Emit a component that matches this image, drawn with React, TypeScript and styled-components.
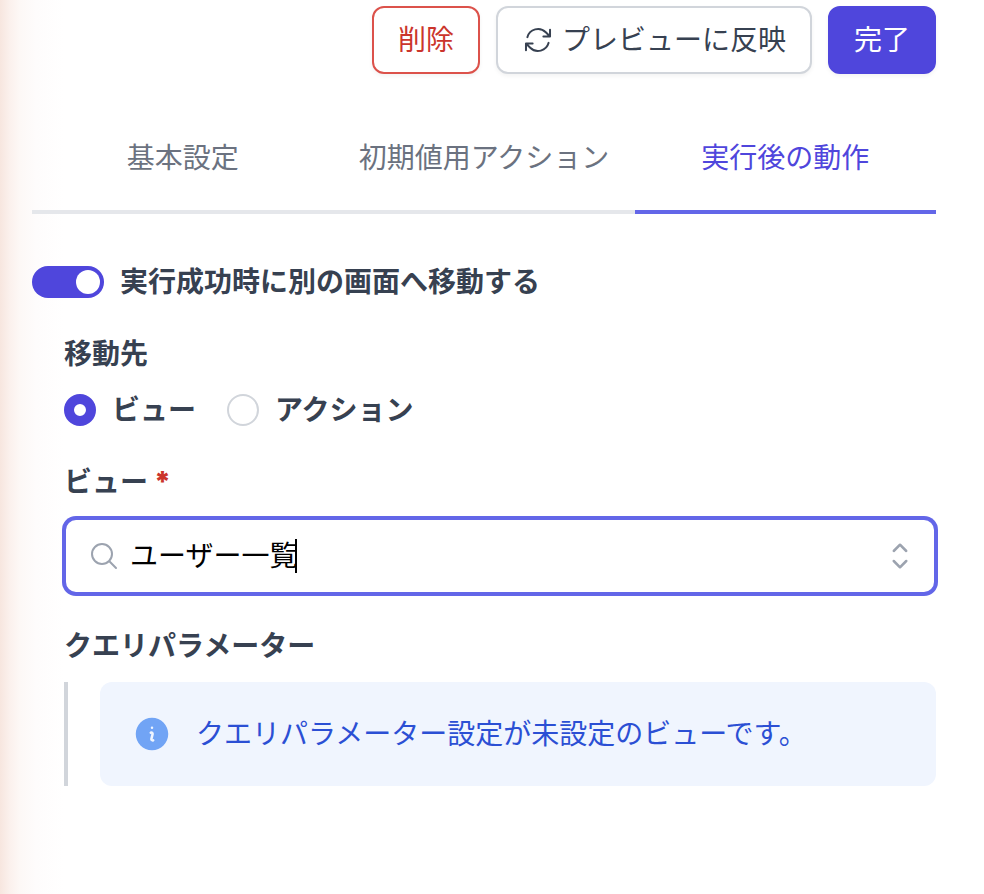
import { useState } from "react";
import styled, { createGlobalStyle, css } from "styled-components";
import {
  HiChevronUpDown,
  HiInformationCircle,
  HiOutlineArrowPath,
  HiOutlineMagnifyingGlass,
} from "react-icons/hi2";

const color = {
  text: "#374151",
  muted: "#6b7280",
  icon: "#9ca3af",
  line: "#d1d5db",
  track: "#e5e7eb",
  primary: "#4f46dc",
  ring: "#6366e8",
  danger: "#cb352c",
  dangerLine: "#dc524b",
  info: "#2b4fd4",
  infoIcon: "#71a4f5",
  infoBg: "#f0f5fe",
};

const GlobalStyle = createGlobalStyle`
  *, *::before, *::after { box-sizing: border-box; }
  html { min-height: 100%; background: #fff; }
  body {
    margin: 0;
    color: ${color.text};
    font-family: Inter, "Noto Sans CJK JP", sans-serif;
    font-size: 28px;
    line-height: 40px;
  }
  button, input { font: inherit; color: inherit; }
`;

const Panel = styled.main`
  min-height: 100vh;
  padding: 6px 48px 48px 32px;
  background: linear-gradient(
    to right,
    #f7e6df 0,
    #fbf1ed 10px,
    #fdf8f6 20px,
    #fefcfc 36px,
    #fff 64px
  );
`;

const Toolbar = styled.header`
  display: flex;
  justify-content: flex-end;
  gap: 16px;
`;

const variants = {
  danger: css`
    color: ${color.danger};
    background: #fff;
    border-color: ${color.dangerLine};
  `,
  plain: css`
    color: ${color.text};
    background: #fff;
    border-color: ${color.line};
  `,
  primary: css`
    color: #fff;
    background: ${color.primary};
    border-color: ${color.primary};
  `,
};

const Button = styled.button<{ $variant: keyof typeof variants }>`
  display: inline-flex;
  align-items: center;
  gap: 8px;
  padding: 12px 24px;
  border: 2px solid;
  border-radius: 12px;
  box-shadow: 0 2px 4px rgba(0, 0, 0, 0.05);
  cursor: pointer;
  ${(p) => variants[p.$variant]}
`;

const Tabs = styled.div`
  display: grid;
  grid-template-columns: repeat(3, 1fr);
  margin-top: 32px;
`;

const Tab = styled.button<{ $active: boolean }>`
  padding: 32px 8px;
  border: 0;
  border-bottom: 4px solid ${(p) => (p.$active ? color.ring : color.track)};
  background: none;
  color: ${(p) => (p.$active ? color.primary : color.muted)};
  cursor: pointer;
`;

const SwitchRow = styled.label`
  display: flex;
  align-items: center;
  gap: 16px;
  margin-top: 48px;
  font-weight: 700;
`;

const Switch = styled.input`
  appearance: none;
  display: flex;
  width: 72px;
  height: 32px;
  margin: 0;
  padding: 4px;
  border-radius: 16px;
  background: ${color.line};

  &::before {
    content: "";
    width: 24px;
    height: 24px;
    border-radius: 50%;
    background: #fff;
  }
  &:checked {
    justify-content: flex-end;
    background: ${color.primary};
  }
`;

const Section = styled.div`
  display: flex;
  flex-direction: column;
  gap: 32px;
  margin-top: 32px;
  padding-left: 32px;
`;

const Field = styled.fieldset`
  display: flex;
  flex-direction: column;
  gap: 16px;
  min-width: 0;
  margin: 0;
  padding: 0;
  border: 0;
`;

const FieldTitle = styled.span`
  font-weight: 700;
`;

const FieldLabel = styled.label`
  display: flex;
  gap: 6px;
  font-weight: 700;
`;

const Required = styled.span`
  color: ${color.danger};
  font-weight: 900;
`;

const Choices = styled.div`
  display: flex;
  gap: 31px;
`;

const Choice = styled.label`
  display: flex;
  align-items: center;
  gap: 16px;
  font-weight: 700;
`;

const Radio = styled.input`
  appearance: none;
  width: 32px;
  height: 32px;
  margin: 0;
  border: 2px solid ${color.line};
  border-radius: 50%;
  background: #fff;

  &:checked {
    border: 10px solid ${color.primary};
  }
`;

const Combo = styled.div`
  display: flex;
  align-items: center;
  padding: 16px 14px 16px 22px;
  border: 2px solid ${color.ring};
  border-radius: 12px;
  box-shadow: 0 0 0 2px ${color.ring};
  background: #fff;
`;

const ComboText = styled.label`
  display: flex;
  flex: 1;
  align-items: center;
  min-width: 0;
  cursor: text;

  svg {
    flex: none;
    margin-right: 10px;
    color: ${color.icon};
  }
`;

const ComboInput = styled.input`
  field-sizing: content;
  min-width: 0;
  height: 40px;
  padding: 0;
  border: 0;
  outline: 0;
  background: none;
  color: #000;
  caret-color: transparent;
`;

const Caret = styled.span`
  flex: none;
  width: 2px;
  height: 34px;
  margin-left: -2px;
  background: #000;
`;

const ComboToggle = styled.button`
  display: flex;
  padding: 0;
  border: 0;
  background: none;
  color: ${color.icon};
  cursor: pointer;
`;

const Nested = styled.div`
  padding-left: 32px;
  border-left: 4px solid ${color.line};
`;

const Notice = styled.div`
  display: flex;
  align-items: center;
  gap: 24px;
  padding: 32px;
  border-radius: 12px;
  background: ${color.infoBg};
  color: ${color.info};

  svg {
    flex: none;
    color: ${color.infoIcon};
  }
`;

const NoticeText = styled.p`
  margin: 0;
`;

const tabNames = ["基本設定", "初期値用アクション", "実行後の動作"];
const targets = ["ビュー", "アクション"];

export default function App() {
  const [tab, setTab] = useState(2);
  const [redirect, setRedirect] = useState(true);
  const [target, setTarget] = useState("ビュー");
  const [view, setView] = useState("ユーザー一覧");

  return (
    <>
      <GlobalStyle />
      <Panel>
        <Toolbar>
          <Button type="button" $variant="danger">削除</Button>
          <Button type="button" $variant="plain">
            <HiOutlineArrowPath size={32} aria-hidden />
            プレビューに反映
          </Button>
          <Button type="button" $variant="primary">完了</Button>
        </Toolbar>

        <Tabs role="tablist">
          {tabNames.map((name, i) => (
            <Tab
              key={name}
              type="button"
              role="tab"
              aria-selected={tab === i}
              $active={tab === i}
              onClick={() => setTab(i)}
            >
              {name}
            </Tab>
          ))}
        </Tabs>

        <SwitchRow>
          <Switch
            type="checkbox"
            role="switch"
            checked={redirect}
            onChange={(e) => setRedirect(e.target.checked)}
          />
          実行成功時に別の画面へ移動する
        </SwitchRow>

        <Section>
          <Field role="radiogroup" aria-labelledby="target-title">
            <FieldTitle id="target-title">移動先</FieldTitle>
            <Choices>
              {targets.map((name) => (
                <Choice key={name}>
                  <Radio
                    type="radio"
                    name="target"
                    checked={target === name}
                    onChange={() => setTarget(name)}
                  />
                  {name}
                </Choice>
              ))}
            </Choices>
          </Field>

          <Field>
            <FieldLabel htmlFor="view">
              ビュー<Required>*</Required>
            </FieldLabel>
            <Combo>
              <ComboText htmlFor="view">
                <HiOutlineMagnifyingGlass size={32} aria-hidden />
                <ComboInput
                  id="view"
                  type="text"
                  role="combobox"
                  aria-expanded={false}
                  required
                  value={view}
                  onChange={(e) => setView(e.target.value)}
                />
                <Caret />
              </ComboText>
              <ComboToggle type="button" aria-label="選択肢を開く">
                <HiChevronUpDown size={40} aria-hidden />
              </ComboToggle>
            </Combo>
          </Field>

          <Field>
            <FieldTitle>クエリパラメーター</FieldTitle>
            <Nested>
              <Notice>
                <HiInformationCircle size={40} aria-hidden />
                <NoticeText>クエリパラメーター設定が未設定のビューです。</NoticeText>
              </Notice>
            </Nested>
          </Field>
        </Section>
      </Panel>
    </>
  );
}
